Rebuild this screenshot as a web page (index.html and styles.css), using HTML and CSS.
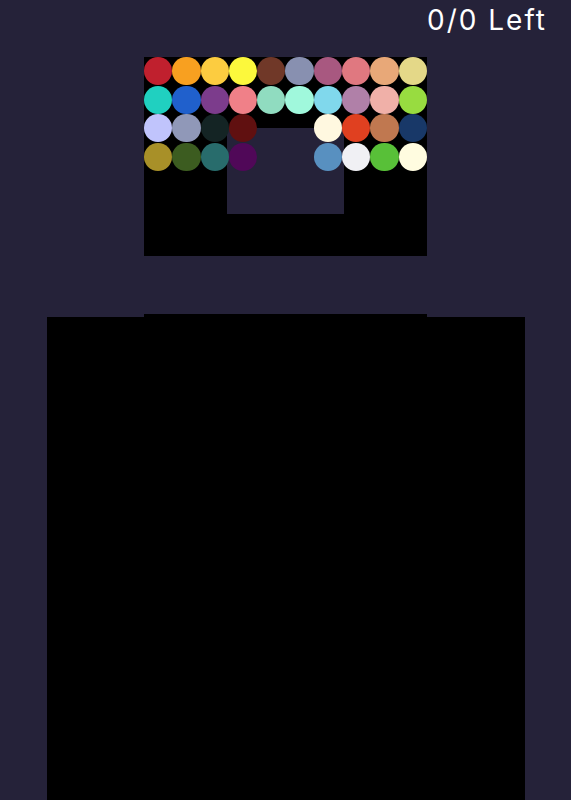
FILE: index.html
```html
<!DOCTYPE html>
<html>
<head>
<meta charset="utf-8">
<link rel="stylesheet" href="styles.css">
</head>
<body>
<header class="topbar"><span class="counter">0/0 Left</span></header>
<section class="palette">
  <div class="hole"></div>
  <div class="grid">
    <span class="dot" style="background:#c0202e"></span>
    <span class="dot" style="background:#f8a020"></span>
    <span class="dot" style="background:#fccc40"></span>
    <span class="dot" style="background:#fcf83c"></span>
    <span class="dot" style="background:#703828"></span>
    <span class="dot" style="background:#8890b0"></span>
    <span class="dot" style="background:#a85880"></span>
    <span class="dot" style="background:#e07880"></span>
    <span class="dot" style="background:#e8a878"></span>
    <span class="dot" style="background:#e4d888"></span>

    <span class="dot" style="background:#20d0c0"></span>
    <span class="dot" style="background:#2060cc"></span>
    <span class="dot" style="background:#7c3c8c"></span>
    <span class="dot" style="background:#f08088"></span>
    <span class="dot" style="background:#90dcc0"></span>
    <span class="dot" style="background:#a0f8dc"></span>
    <span class="dot" style="background:#80d8ec"></span>
    <span class="dot" style="background:#b080a8"></span>
    <span class="dot" style="background:#f0b0a8"></span>
    <span class="dot" style="background:#98dc40"></span>

    <span class="dot" style="background:#c0c4fc"></span>
    <span class="dot" style="background:#9098b8"></span>
    <span class="dot" style="background:#142424"></span>
    <span class="dot" style="background:#601010"></span>
    <span class="dot empty"></span>
    <span class="dot empty"></span>
    <span class="dot" style="background:#fff8e0"></span>
    <span class="dot" style="background:#e04020"></span>
    <span class="dot" style="background:#c07850"></span>
    <span class="dot" style="background:#183868"></span>

    <span class="dot" style="background:#a89028"></span>
    <span class="dot" style="background:#3c5c20"></span>
    <span class="dot" style="background:#286c6c"></span>
    <span class="dot" style="background:#500858"></span>
    <span class="dot empty"></span>
    <span class="dot empty"></span>
    <span class="dot" style="background:#5890c0"></span>
    <span class="dot" style="background:#f0f0f4"></span>
    <span class="dot" style="background:#58c038"></span>
    <span class="dot" style="background:#fffce0"></span>
  </div>
</section>
<div class="strip"></div>
<main class="board"></main>
</body>
</html>
```
FILE: styles.css
```css
html, body {
  margin: 0;
  padding: 0;
  background: #252239;
  height: 100%;
  overflow: hidden;
}
body {
  display: flex;
  flex-direction: column;
  align-items: center;
  font-family: "Inter", "Liberation Sans", sans-serif;
}
.topbar {
  align-self: stretch;
  height: 57px;
  display: flex;
  justify-content: flex-end;
  align-items: flex-start;
  padding-right: 24px;
  box-sizing: border-box;
}
.counter {
  color: #ffffff;
  font-size: 28px;
  line-height: 40px;
  letter-spacing: 2px;
}
.palette {
  position: relative;
  width: 283px;
  height: 199px;
  background: #000000;
}
.hole {
  position: absolute;
  left: 83px;
  top: 71px;
  width: 117px;
  height: 86px;
  background: #252239;
}
.grid {
  position: relative;
  display: grid;
  grid-template-columns: repeat(10, 28.3px);
  grid-auto-rows: 28.6px;
}
.dot {
  width: 28.3px;
  height: 28.3px;
  border-radius: 50%;
}
.dot.empty {
  background: transparent;
}
.strip {
  width: 283px;
  height: 3px;
  margin-top: 58px;
  background: #000000;
}
.board {
  width: 478px;
  flex: 1;
  background: #000000;
}
```
